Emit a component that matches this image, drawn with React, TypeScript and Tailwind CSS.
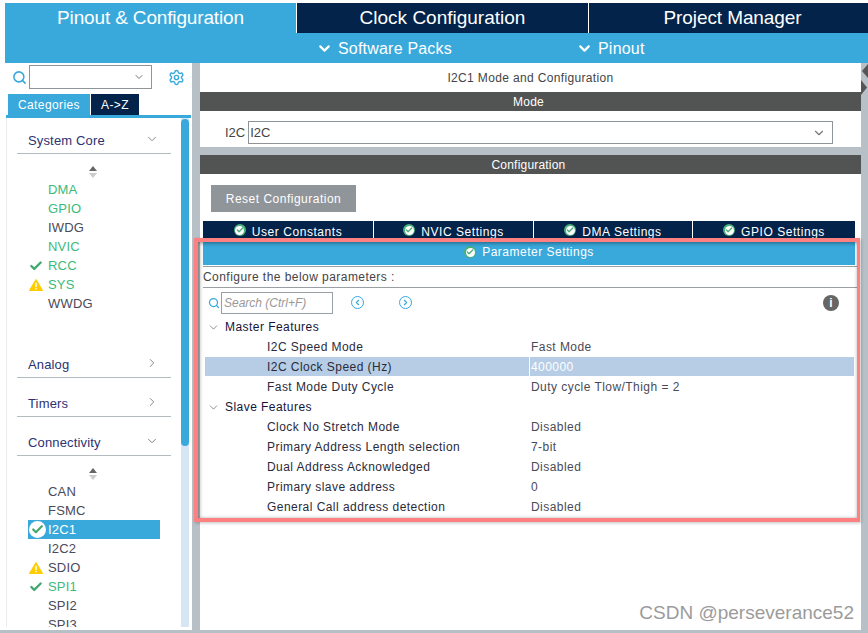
import { ChevronDown, ChevronRight, ChevronLeft, Search, Settings, Check } from 'lucide-react';

function GreenCheck({ size = 13 }: { size?: number }) {
  return (
    <span
      className="inline-flex items-center justify-center rounded-full bg-[#4caf7a] shrink-0"
      style={{ width: size, height: size }}
    >
      <span className="inline-flex items-center justify-center rounded-full bg-white w-[75%] h-[75%]">
        <Check className="text-[#4caf7a] w-[90%] h-[90%]" strokeWidth={4} />
      </span>
    </span>
  );
}

function ActiveCheck() {
  return (
    <span className="inline-flex items-center justify-center rounded-full bg-white w-[17px] h-[17px] shrink-0">
      <Check className="text-[#43a86f] w-[13px] h-[13px]" strokeWidth={4} />
    </span>
  );
}

function Warn() {
  return (
    <svg width="14" height="12" viewBox="0 0 14 12" className="shrink-0">
      <path d="M7 0.5 L13.6 11.5 L0.4 11.5 Z" fill="#ffcc00" stroke="#ffcc00" strokeLinejoin="round" />
      <rect x="6.3" y="3.8" width="1.4" height="4.2" fill="#fff" />
      <rect x="6.3" y="8.8" width="1.4" height="1.5" fill="#fff" />
    </svg>
  );
}

function Updown() {
  return (
    <svg width="8" height="12" viewBox="0 0 8 12" className="block">
      <path d="M4 0 L8 5 L0 5 Z" fill="#666" />
      <path d="M4 12 L8 7 L0 7 Z" fill="#ccc" />
    </svg>
  );
}

function Item({ label, mark, green, active }: { label: string; mark?: 'check' | 'warn' | 'circle'; green?: boolean; active?: boolean }) {
  return (
    <div className={`flex h-[19px] items-center w-[132px] ml-[21px] ${active ? 'bg-[#39a9dc] text-white' : green ? 'text-[#3dba7a]' : 'text-[#4a4a5a]'}`}>
      <span className="w-[20px] flex items-center pl-px shrink-0">
        {mark === 'check' && <Check className="w-[14px] h-[14px] text-[#43a86f]" strokeWidth={4} />}
        {mark === 'warn' && <Warn />}
        {mark === 'circle' && <ActiveCheck />}
      </span>
      <span className="text-[13px] tracking-[0.2px] leading-none">{label}</span>
    </div>
  );
}

function Category({ label, open }: { label: string; open?: boolean }) {
  return (
    <div className="ml-[10px] w-[154px] h-[29px] flex items-center justify-between border-b border-[#b5bcc0] pl-[11px] pr-[12px] pt-[3px] text-[13px] tracking-[0.15px] text-[#2d3270]">
      <span>{label}</span>
      {open ? (
        <ChevronDown className="w-[14px] h-[14px] text-[#777] -mt-[3px]" strokeWidth={1.5} />
      ) : (
        <ChevronRight className="w-[14px] h-[14px] text-[#777] -mt-[3px]" strokeWidth={1.5} />
      )}
    </div>
  );
}

function TabHead({ label, w }: { label: string; w: string }) {
  return (
    <div className={`${w} h-[18px] bg-[#03234b] flex items-center justify-center gap-[6px] text-white text-[12px] tracking-[0.55px] border-r border-white last:border-r-0`}>
      <GreenCheck size={12} />
      <span className="pt-[3px]">{label}</span>
    </div>
  );
}

function Row({ name, value, selected }: { name: string; value: string; selected?: boolean }) {
  return (
    <div className="flex h-[20px] items-stretch w-[649px] ml-[5px] text-[12px] tracking-[0.45px]">
      <span className={`w-[324px] pl-[62px] flex items-center text-[#2a2a3a] ${selected ? 'bg-[#b6cde5] h-[19px]' : ''}`}>{name}</span>
      <span className={`flex-1 ml-px pl-px flex items-center ${selected ? 'bg-[#b6cde5] h-[19px] text-white' : 'text-[#4a4a55]'}`}>{value}</span>
    </div>
  );
}

function Group({ label }: { label: string }) {
  return (
    <div className="flex h-[20px] items-center ml-[7px] text-[12px] tracking-[0.45px] text-[#15153a]">
      <ChevronDown className="w-[13px] h-[13px] text-[#777] mr-[5px]" strokeWidth={1.5} />
      <span>{label}</span>
    </div>
  );
}

export default function App() {
  return (
    <div className="relative w-[868px] h-[633px] overflow-hidden bg-white font-['Liberation_Sans',Arial,sans-serif]">
      <div className="pt-[3px] pl-[5px]">
        {/* top tabs */}
        <div className="bg-[#39a9dc] h-[60px]">
          <div className="flex h-[30px]">
            <div className="w-[291px] flex items-center justify-center text-white text-[19px] tracking-[-0.15px]">Pinout &amp; Configuration</div>
            <div className="w-[292px] flex items-center justify-center bg-[#03234b] text-white text-[19px] border-l border-white">Clock Configuration</div>
            <div className="flex-1 flex items-center justify-center pl-[8px] bg-[#03234b] text-white text-[19px] tracking-[-0.1px] border-l border-white">Project Manager</div>
          </div>
          <div className="flex h-[30px] items-center text-white text-[16px] tracking-[0.2px] pt-px">
            <div className="flex items-center ml-[311px] w-[260px]">
              <ChevronDown className="w-[17px] h-[17px] mr-[5px]" strokeWidth={3} />
              Software Packs
            </div>
            <div className="flex items-center">
              <ChevronDown className="w-[17px] h-[17px] mr-[5px]" strokeWidth={3} />
              Pinout
            </div>
          </div>
        </div>

        <div className="flex h-[570px]">
          {/* left sidebar */}
          <div className="w-[187px] h-full overflow-hidden">
            <div className="flex items-center h-[26px] mt-px">
              <Search className="w-[15px] h-[15px] text-[#39a9dc] ml-[7px] mr-[2px]" strokeWidth={2.5} />
              <div className="w-[123px] h-[24px] border border-[#8f9499] flex items-center justify-end pr-[6px]">
                <ChevronDown className="w-[12px] h-[12px] text-[#777]" />
              </div>
              <Settings className="w-[17px] h-[17px] text-[#39a9dc] ml-[16px]" />
            </div>
            <div className="flex mt-[4px] ml-[3px] h-[21px] text-[12px] tracking-[0.4px] text-white">
              <div className="w-[82px] bg-[#39a9dc] flex items-center justify-center">Categories</div>
              <div className="w-[48px] ml-px bg-[#03234b] flex items-center justify-center">A-&gt;Z</div>
            </div>
            <div className="h-[3px] w-[185px] ml-px bg-[#39a9dc]" />
            <div className="flex h-[509px] overflow-hidden border-l border-[#ececec] ml-px">
              <div className="w-[174px] pt-[7px]">
                <Category label="System Core" open />
                <div className="ml-[82px] mt-[12px] mb-[1px] h-[13px]"><Updown /></div>
                <Item label="DMA" green />
                <Item label="GPIO" green />
                <Item label="IWDG" />
                <Item label="NVIC" green />
                <Item label="RCC" green mark="check" />
                <Item label="SYS" green mark="warn" />
                <Item label="WWDG" />
                <div className="h-[36px]" />
                <Category label="Analog" />
                <div className="h-[10px]" />
                <Category label="Timers" />
                <div className="h-[10px]" />
                <Category label="Connectivity" open />
                <div className="ml-[82px] mt-[12px] mb-[1px] h-[13px]"><Updown /></div>
                <Item label="CAN" />
                <Item label="FSMC" />
                <Item label="I2C1" active mark="circle" />
                <Item label="I2C2" />
                <Item label="SDIO" mark="warn" />
                <Item label="SPI1" green mark="check" />
                <Item label="SPI2" />
                <Item label="SPI3" />
              </div>
              <div className="w-[8px] h-full pt-px bg-[#d6e6f4]">
                <div className="w-[8px] h-[327px] rounded-[4px] bg-[#39a9dc]" />
              </div>
            </div>
          </div>

          {/* separator */}
          <div className="w-[8px] bg-[#b6c0c6]" />

          {/* main panel */}
          <div className="w-[661px] h-full bg-white">
            <div className="h-[29px] flex items-center justify-center text-[12px] tracking-[0.35px] text-[#444]">I2C1 Mode and Configuration</div>
            <div className="h-[19px] bg-[#525453] flex items-center justify-center pr-[4px] text-[12px] tracking-[0.2px] text-white">Mode</div>
            <div className="h-[36px] flex items-center pt-[7px]">
              <span className="ml-[25px] mr-[3px] text-[13px] text-[#444]">I2C</span>
              <div className="w-[585px] h-[23px] border border-[#8f9499] flex items-center justify-between pl-px pr-[6px] text-[13px] text-[#444]">
                <span>I2C</span>
                <ChevronDown className="w-[14px] h-[14px] text-[#777]" />
              </div>
            </div>
            <div className="h-[8px] bg-[#b6c0c6]" />
            <div className="h-[19px] bg-[#525453] flex items-center justify-center pr-[4px] text-[12px] tracking-[0.2px] text-white">Configuration</div>
            <div className="h-[47px] pl-[11px] pt-[11px]">
              <div className="w-[145px] h-[27px] bg-[#90959a] text-white text-[12px] tracking-[0.5px] flex items-center justify-center">Reset Configuration</div>
            </div>
            <div className="flex ml-[3px] w-[652px]">
              <TabHead label="User Constants" w="w-[171px]" />
              <TabHead label="NVIC Settings" w="w-[160px]" />
              <TabHead label="DMA Settings" w="w-[159px]" />
              <TabHead label="GPIO Settings" w="flex-1" />
            </div>
            <div className="ml-[3px] w-[652px] h-[26px] bg-[#39a9dc] flex items-center justify-center gap-[6px] text-white text-[12px] tracking-[0.5px]">
              <GreenCheck size={12} />
              <span>Parameter Settings</span>
            </div>
            <div className="ml-[3px] w-[655px] h-[22px] mt-px border-y border-[#9a9fa3] border-r flex items-center text-[12px] tracking-[0.45px] text-[#444]">
              Configure the below parameters :
            </div>
            <div className="h-[29px] flex items-center">
              <Search className="w-[12px] h-[12px] text-[#39a9dc] ml-[8px] mr-px" strokeWidth={2.5} />
              <div className="w-[112px] h-[22px] border border-[#9a9fa3] flex items-center pl-[2px] text-[12px] italic text-[#999]">Search (Ctrl+F)</div>
              <span className="ml-[18px] w-[13px] h-[13px] rounded-full border border-[#39a9dc] flex items-center justify-center">
                <ChevronLeft className="w-[9px] h-[9px] text-[#39a9dc]" strokeWidth={3} />
              </span>
              <span className="ml-[35px] w-[13px] h-[13px] rounded-full border border-[#39a9dc] flex items-center justify-center">
                <ChevronRight className="w-[9px] h-[9px] text-[#39a9dc]" strokeWidth={3} />
              </span>
              <span className="ml-auto mr-[22px] w-[16px] h-[16px] rounded-full bg-[#666] text-white text-[12px] font-bold flex items-center justify-center">i</span>
            </div>
            <Group label="Master Features" />
            <Row name="I2C Speed Mode" value="Fast Mode" />
            <Row name="I2C Clock Speed (Hz)" value="400000" selected />
            <Row name="Fast Mode Duty Cycle" value="Duty cycle Tlow/Thigh = 2" />
            <Group label="Slave Features" />
            <Row name="Clock No Stretch Mode" value="Disabled" />
            <Row name="Primary Address Length selection" value="7-bit" />
            <Row name="Dual Address Acknowledged" value="Disabled" />
            <Row name="Primary slave address" value="0" />
            <Row name="General Call address detection" value="Disabled" />
          </div>

          {/* right strip */}
          <div className="flex-1 bg-[#b6c0c6]" />
        </div>
      </div>

      {/* collapse arrows on the right strip */}
      <svg width="7" height="33" viewBox="0 0 7 33" className="absolute left-[861px] top-[63px]">
        <path d="M7 1 L1 8 L7 15 Z" fill="#555" />
        <path d="M0 17 L6 24.5 L0 32 Z" fill="#555" />
      </svg>

      {/* bottom gray edge */}
      <div className="absolute left-0 right-0 top-[630px] h-[3px] bg-[#b6c0c6]" />

      {/* red annotation box */}
      <div className="absolute left-[194px] top-[238px] w-[666px] h-[284px] border-[4px] border-r-[3px] border-[#ff8080] shadow-[inset_1px_1px_4px_rgba(0,0,0,0.45),1px_1px_3px_rgba(0,0,0,0.25)]" />

      {/* watermark */}
      <div className="absolute right-[14px] top-[602px] text-[19px] leading-[22px] text-[#9b9b9b]">CSDN @perseverance52</div>
    </div>
  );
}
